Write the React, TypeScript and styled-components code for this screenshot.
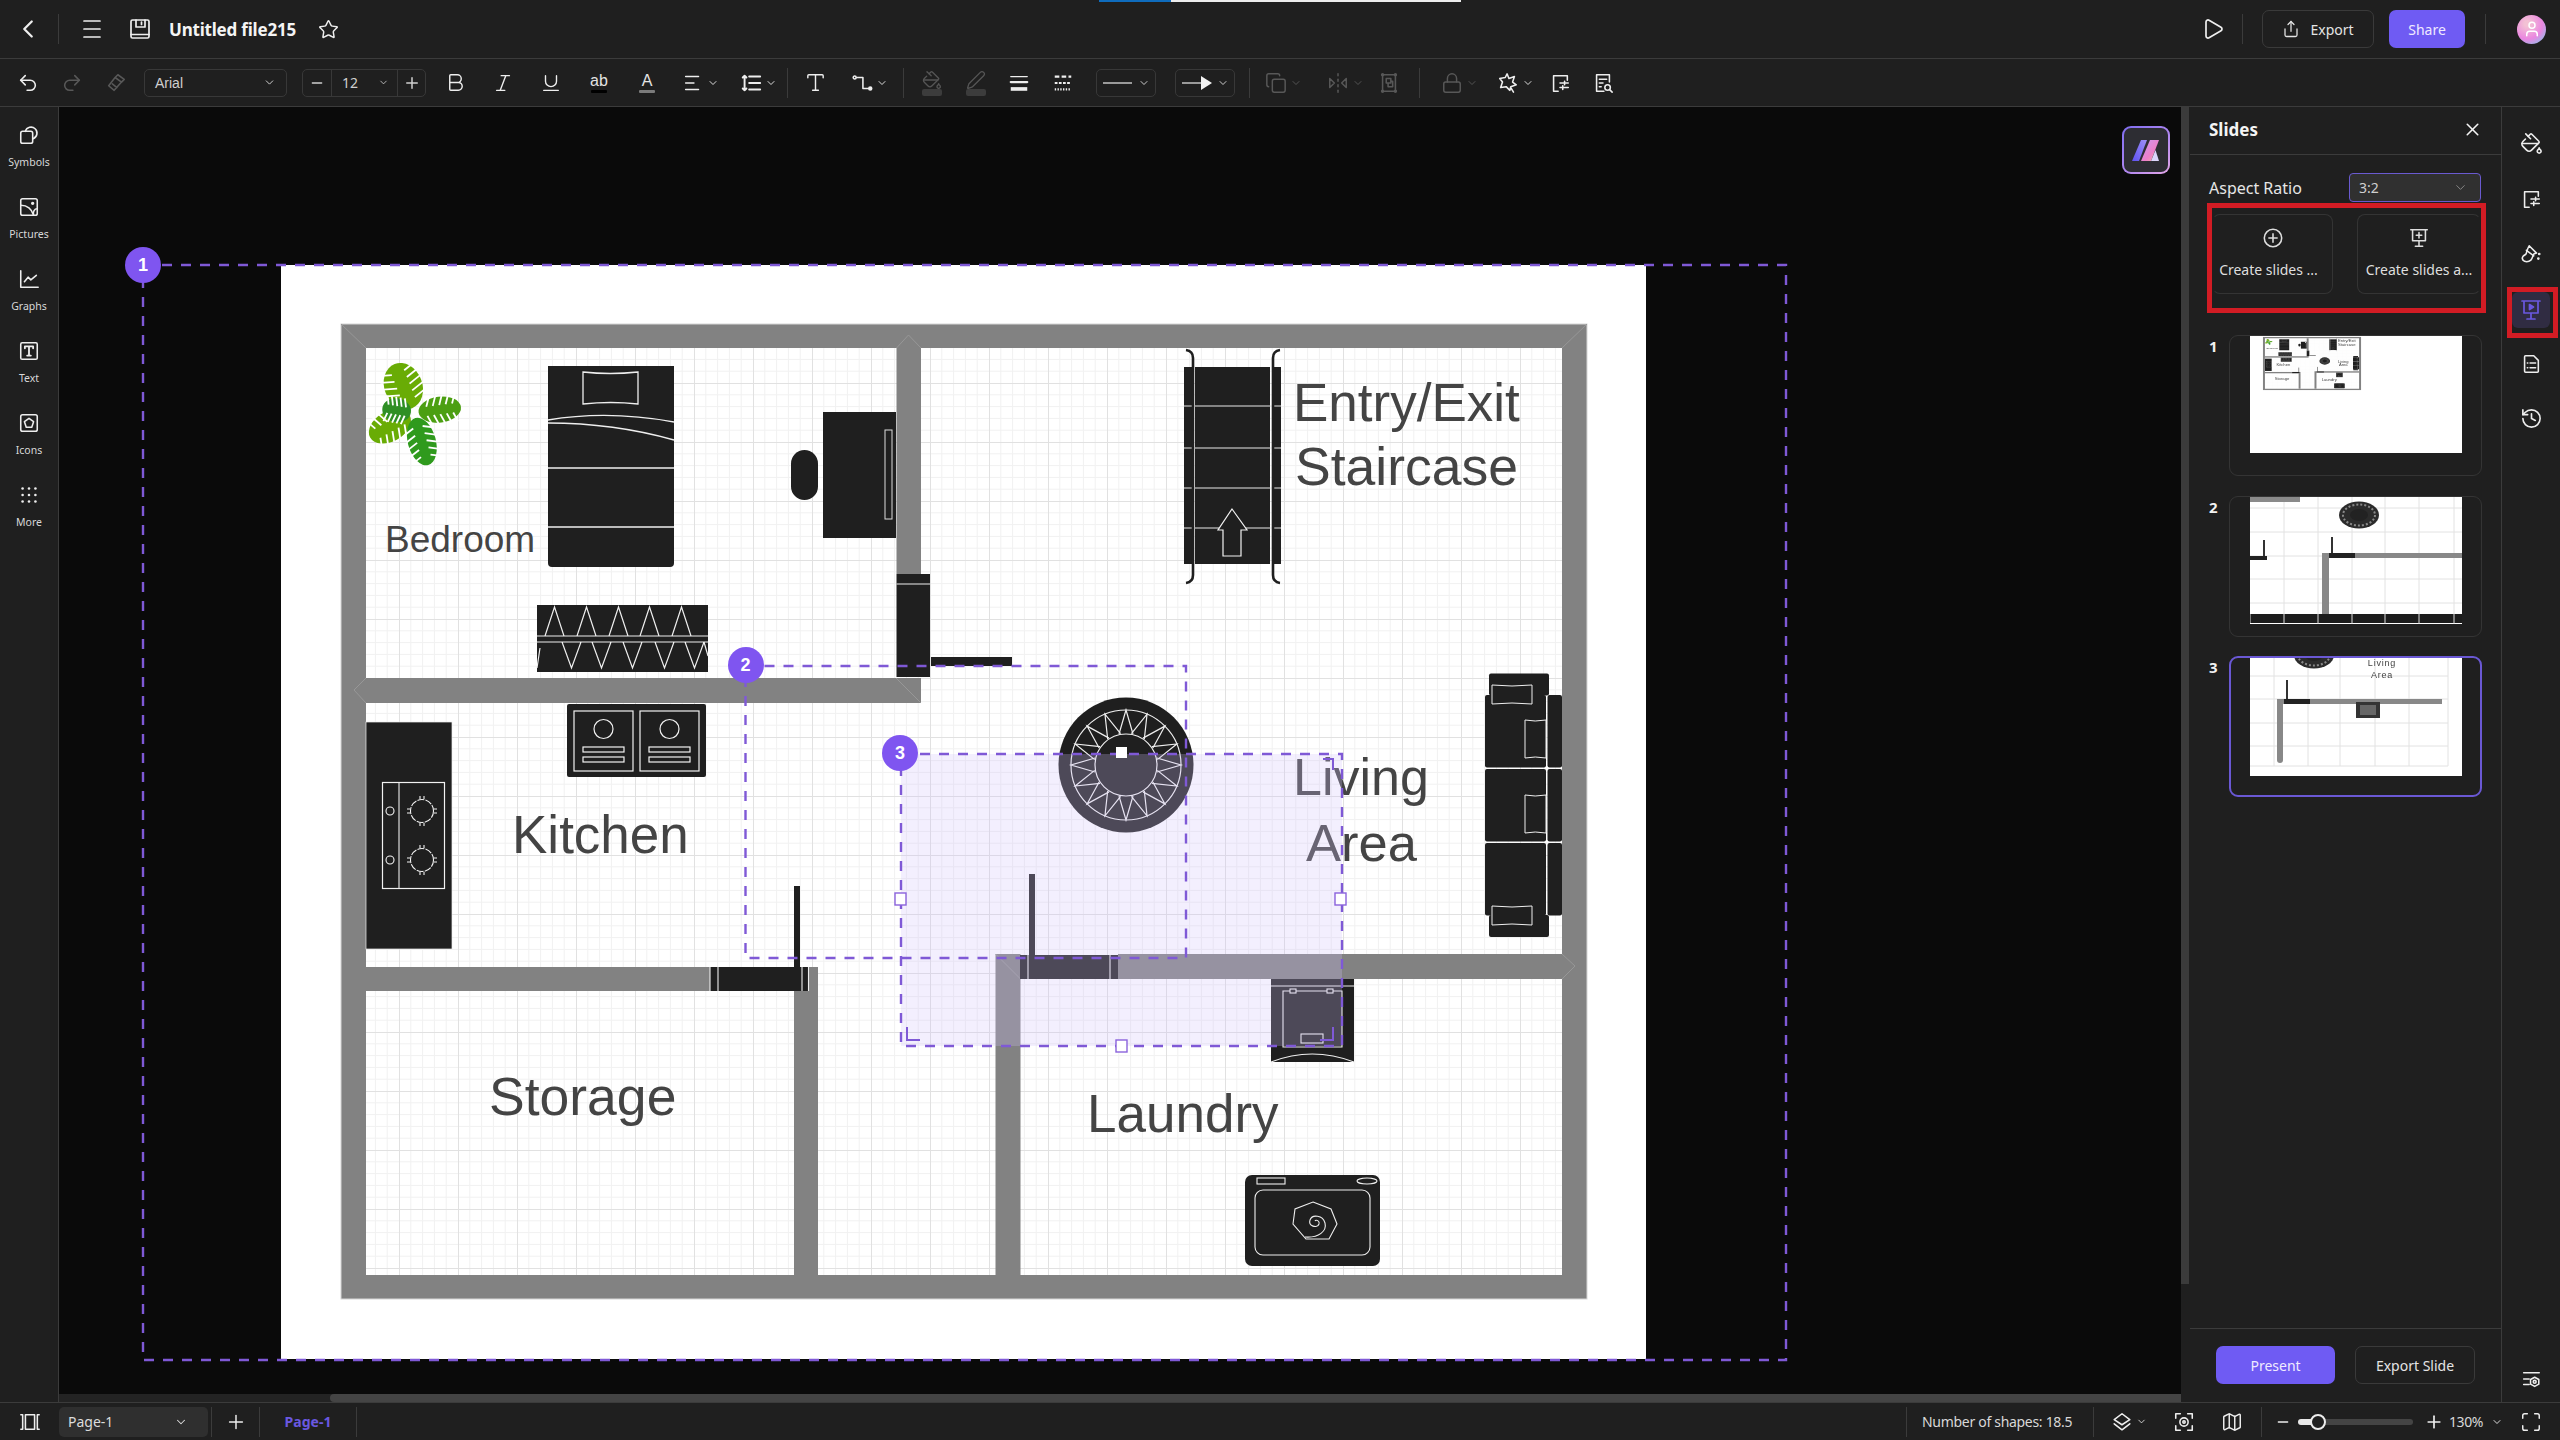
import React from 'react'
import styled, { createGlobalStyle } from 'styled-components'
import {
  Bold, ChevronDown, ChevronLeft, Copy, FlipHorizontal2, History, Italic, Lock, Map as MapIcon,
  Maximize, Minus, PaintBucket, Pen, Play, Plus, Redo2, Share, Star, Type, Underline, Undo2, User, X,
} from 'lucide-react'

const UI_FONT = `"Noto Sans", "Open Sans", sans-serif`
const BAR = '#1f1f1f'
const LINE = '#3b3b3b'
const PURPLE = '#6f5bf3'
const RED = '#d21c24'
const INK = '#1f1f1f'
const WALL = '#828282'

const Global = createGlobalStyle`
  html, body { margin: 0; padding: 0; background: #0a0a0a; }
  body { font-family: ${UI_FONT}; color: #e9e9e9; }
  *, *::before, *::after { box-sizing: border-box; }
`

const Root = styled.div`
  width: 2560px;
  height: 1440px;
  display: flex;
  flex-direction: column;
  overflow: hidden;
  position: relative;
  background: ${BAR};
`

/* ---------- small svg icon base ---------- */
const Ico = styled.svg.attrs<{ $s?: number }>(({ $s = 22 }) => ({
  width: $s,
  height: $s,
  viewBox: '0 0 24 24',
  fill: 'none',
  stroke: 'currentColor',
  strokeWidth: 1.7,
  strokeLinecap: 'round',
  strokeLinejoin: 'round',
}))`
  flex: none;
`

/* ---------- top bar ---------- */
const TopBarWrap = styled.header`
  height: 59px;
  flex: none;
  display: flex;
  align-items: center;
  border-bottom: 1px solid ${LINE};
  padding-right: 14px;
`

const LoadStrip = styled.div`
  position: absolute;
  top: 0;
  left: 1099px;
  width: 362px;
  height: 2px;
  background: linear-gradient(90deg, #0f6cbd 0 72px, #ececec 72px);
`

const IconBtn = styled.div<{ $w?: number; $ml?: number; $dim?: boolean }>`
  width: ${(p) => p.$w ?? 48}px;
  margin-left: ${(p) => p.$ml ?? 0}px;
  height: 44px;
  flex: none;
  display: flex;
  align-items: center;
  justify-content: center;
  gap: 3px;
  color: ${(p) => (p.$dim ? '#585858' : '#eeeeee')};
`

const VSep = styled.div<{ $ml?: number; $h?: number }>`
  width: 1px;
  flex: none;
  height: ${(p) => p.$h ?? 30}px;
  margin-left: ${(p) => p.$ml ?? 0}px;
  background: ${LINE};
`

const FileName = styled.div`
  margin-left: 5px;
  width: 131px;
  font-size: 17px;
  font-weight: 700;
  color: #f4f4f4;
  white-space: nowrap;
  letter-spacing: -0.2px;
`

const Spacer = styled.div`
  flex: 1;
`

const GhostButton = styled.div<{ $w: number; $ml?: number }>`
  width: ${(p) => p.$w}px;
  height: 38px;
  margin-left: ${(p) => p.$ml ?? 0}px;
  flex: none;
  border: 1px solid #3a3a3a;
  border-radius: 7px;
  display: flex;
  align-items: center;
  justify-content: center;
  gap: 10px;
  font-size: 14px;
  color: #e4e4e4;
`

const SolidButton = styled.div<{ $w: number; $ml?: number }>`
  width: ${(p) => p.$w}px;
  height: 38px;
  margin-left: ${(p) => p.$ml ?? 0}px;
  flex: none;
  border-radius: 7px;
  background: ${PURPLE};
  color: #efeaff;
  font-size: 14px;
  display: flex;
  align-items: center;
  justify-content: center;
`

const Avatar = styled.div`
  width: 29px;
  height: 29px;
  margin-left: 31px;
  flex: none;
  border-radius: 50%;
  background: radial-gradient(circle at 35% 30%, #f3c1d4 10%, #ea86e0 55%, #6fd3f0 100%);
  color: #fff;
  display: flex;
  align-items: center;
  justify-content: center;
`

/* ---------- toolbar ---------- */
const ToolBarWrap = styled.div`
  height: 48px;
  flex: none;
  display: flex;
  align-items: center;
  padding-left: 6px;
  border-bottom: 1px solid ${LINE};
`

const Select = styled.div<{ $w: number; $ml: number }>`
  width: ${(p) => p.$w}px;
  margin-left: ${(p) => p.$ml}px;
  height: 28px;
  flex: none;
  display: flex;
  align-items: center;
  justify-content: space-between;
  padding: 0 10px;
  border: 1px solid #383838;
  border-radius: 5px;
  font-family: "Liberation Sans", Arial, sans-serif;
  font-size: 14px;
  color: #d0d0d0;
`

const SizeGroup = styled.div`
  width: 124px;
  margin-left: 15px;
  height: 28px;
  flex: none;
  display: flex;
  align-items: center;
  border: 1px solid #383838;
  border-radius: 5px;
  color: #cfcfcf;
  font-size: 14px;
`

const SizeStep = styled.div<{ $w: number }>`
  width: ${(p) => p.$w}px;
  height: 100%;
  display: flex;
  align-items: center;
  justify-content: center;
`

const SizeValue = styled.div`
  flex: 1;
  height: 100%;
  display: flex;
  align-items: center;
  justify-content: space-between;
  padding: 0 8px 0 10px;
  border-left: 1px solid #383838;
  border-right: 1px solid #383838;
`

const TextTool = styled.div<{ $bar: string }>`
  display: flex;
  flex-direction: column;
  align-items: center;
  font-family: "Liberation Sans", Arial, sans-serif;
  font-size: 16px;
  line-height: 17px;
  color: #e4e4e4;

  &::after {
    content: '';
    width: 16px;
    height: 3px;
    margin-top: 1px;
    border-radius: 1px;
    background: ${(p) => p.$bar};
  }
`

const SwatchTool = styled.div`
  display: flex;
  flex-direction: column;
  align-items: center;
  color: #555;

  &::after {
    content: '';
    width: 20px;
    height: 7px;
    margin-top: -1px;
    border-radius: 2px;
    background: #3c3c3c;
  }
`

const LinePicker = styled.div<{ $w: number; $ml: number }>`
  width: ${(p) => p.$w}px;
  margin-left: ${(p) => p.$ml}px;
  height: 28px;
  flex: none;
  display: flex;
  align-items: center;
  justify-content: space-between;
  padding: 0 5px 0 6px;
  border: 1px solid #383838;
  border-radius: 5px;
  color: #dddddd;
`

const LinePreview = styled.div`
  width: 29px;
  height: 2px;
  background: #9a9a9a;
`

/* ---------- main ---------- */
const Main = styled.div`
  flex: 1;
  min-height: 0;
  display: flex;
`

const LeftRail = styled.nav`
  width: 59px;
  flex: none;
  padding-top: 12px;
  border-right: 1px solid ${LINE};
`

const RailItem = styled.div`
  height: 72px;
  display: flex;
  flex-direction: column;
  align-items: center;
  color: #ededed;
`

const RailIcon = styled.div`
  height: 32px;
  display: flex;
  align-items: center;
  justify-content: center;
`

const RailLabel = styled.div`
  margin-top: 4px;
  font-size: 10.5px;
  line-height: 14px;
  color: #d8d8d8;
`

/* ---------- canvas ---------- */
const Canvas = styled.main`
  flex: none;
  width: 2131px;
  position: relative;
  overflow: hidden;
  background: #0a0a0a;
`

const PagePlate = styled.div`
  position: absolute;
  left: 222px;
  top: 158px;
  width: 1365px;
  height: 1094px;
  background: #fff;
`

const PlanSvg = styled.svg`
  display: block;
  width: 100%;
  height: 100%;

  text {
    font-family: "Liberation Sans", Arial, sans-serif;
    fill: #444444;
  }
`

const Overlay = styled.svg`
  position: absolute;
  inset: 0;
  width: 100%;
  height: 100%;
  pointer-events: none;
`

const Badge = styled.div<{ $x: number; $y: number }>`
  position: absolute;
  left: ${(p) => p.$x - 59 - 18}px;
  top: ${(p) => p.$y - 107 - 18}px;
  width: 36px;
  height: 36px;
  border-radius: 50%;
  background: #7f55f0;
  color: #fff;
  display: flex;
  align-items: center;
  justify-content: center;
  font-family: "Liberation Sans", Arial, sans-serif;
  font-weight: 700;
  font-size: 18px;
`

const AiButton = styled.div`
  position: absolute;
  left: 2063px;
  top: 19px;
  width: 48px;
  height: 48px;
  border-radius: 9px;
  padding: 2px;
  background: linear-gradient(140deg, #7d6cf0, #b58af0 60%, #e3a6e6);
`

const AiInner = styled.div`
  width: 100%;
  height: 100%;
  border-radius: 7px;
  background: #2d2d33;
  display: flex;
  align-items: center;
  justify-content: center;
`

const VScroll = styled.div`
  position: absolute;
  right: 0;
  top: 0;
  bottom: 0;
  width: 9px;
  background: ${BAR};

  &::before {
    content: '';
    display: block;
    width: 8px;
    height: 1177px;
    background: #3b3b3b;
  }
`

const HScroll = styled.div`
  position: absolute;
  left: 0;
  right: 9px;
  bottom: 0;
  height: 8px;
  background: #232323;

  &::before {
    content: '';
    display: block;
    height: 100%;
    margin-left: 271px;
    background: #444;
    border-radius: 4px 0 0 4px;
  }
`

/* ---------- slides panel ---------- */
const SlidesPanel = styled.aside`
  width: 312px;
  flex: none;
  display: flex;
  flex-direction: column;
  border-right: 1px solid ${LINE};
`

const PanelHead = styled.div`
  height: 48px;
  flex: none;
  display: flex;
  align-items: center;
  justify-content: space-between;
  padding: 0 18px 2px 19px;
  border-bottom: 1px solid ${LINE};
  font-size: 17px;
  font-weight: 700;
  color: #f4f4f4;
`

const RatioRow = styled.div`
  margin-top: 18px;
  height: 29px;
  flex: none;
  display: flex;
  align-items: center;
  justify-content: space-between;
  padding: 0 20px 0 19px;
  font-size: 16px;
  color: #e6e6e6;
`

const RatioSelect = styled.div`
  width: 132px;
  height: 29px;
  display: flex;
  align-items: center;
  justify-content: space-between;
  padding: 0 12px 0 9px;
  background: #303030;
  border: 1px solid #6a5ad0;
  border-radius: 4px;
  font-size: 14px;
  color: #cfcfcf;
`

const CreateBox = styled.div`
  margin: 1px 0 0 17px;
  width: 279px;
  height: 110px;
  flex: none;
  border: 5px solid ${RED};
  padding-top: 6px;
  display: flex;
  justify-content: space-between;
  align-items: flex-start;
`

const CreateCard = styled.div<{ $w: number; $flat?: boolean }>`
  width: ${(p) => p.$w}px;
  height: 80px;
  display: flex;
  flex-direction: column;
  align-items: center;
  padding-top: 12px;
  gap: 12px;
  border: 1px solid #343434;
  border-left-color: ${(p) => (p.$flat ? 'transparent' : '#343434')};
  border-right-color: ${(p) => (p.$flat ? '#343434' : 'transparent')};
  border-radius: 8px;
  font-size: 14px;
  line-height: 18px;
  color: #dedede;
  white-space: nowrap;
`

const CardLabel = styled.div<{ $shift?: number }>`
  margin-left: ${(p) => p.$shift ?? 0}px;
`

const SlideList = styled.div`
  margin-top: 22px;
  padding-left: 19px;
  display: flex;
  flex-direction: column;
  gap: 19.5px;
`

const SlideRow = styled.div`
  display: flex;
`

const SlideNumber = styled.div`
  width: 20px;
  font-size: 15px;
  line-height: 22px;
  font-weight: 700;
  color: #f2f2f2;
`

const SlideCard = styled.div<{ $active?: boolean }>`
  width: 253px;
  height: 141px;
  display: flex;
  justify-content: center;
  align-items: flex-start;
  border: ${(p) => (p.$active ? `2px solid #6a58d4` : `1px solid #343434`)};
  border-radius: 9px;
  overflow: hidden;
`

const Thumb = styled.div<{ $h: number; $active?: boolean }>`
  width: 212px;
  height: ${(p) => p.$h}px;
  background: #fff;
  flex: none;
  filter: blur(0.35px);
`

const PanelFoot = styled.div`
  margin-top: auto;
  height: 74px;
  flex: none;
  display: flex;
  gap: 20px;
  padding: 17px 0 0 26px;
  border-top: 1px solid ${LINE};
`

/* ---------- right rail ---------- */
const RightRail = styled.aside`
  flex: none;
  width: 58px;
  display: flex;
  flex-direction: column;
  align-items: center;
  padding-top: 9px;
  color: #ededed;
`

const RightBtn = styled.div<{ $active?: boolean; $h?: number }>`
  width: 38px;
  height: ${(p) => (p.$active ? 36 : p.$h ?? 55)}px;
  margin: ${(p) => (p.$active ? '11px 0 8px' : '0')};
  flex: none;
  position: relative;
  display: flex;
  align-items: center;
  justify-content: center;
  border-radius: 6px;
  background: ${(p) => (p.$active ? '#302c42' : 'transparent')};
  color: ${(p) => (p.$active ? '#6a58e0' : 'inherit')};

  ${(p) =>
    p.$active &&
    `&::after {
      content: '';
      position: absolute;
      left: -5px;
      top: -5px;
      width: 51px;
      height: 51px;
      border: 5px solid ${RED};
    }`}
`

const RailBottom = styled.div`
  margin-top: auto;
`

/* ---------- status bar ---------- */
const StatusBar = styled.footer`
  height: 38px;
  flex: none;
  display: flex;
  align-items: center;
  border-top: 1px solid ${LINE};
  font-size: 14px;
  color: #d8d8d8;
`

const PageSelect = styled.div`
  width: 149px;
  height: 30px;
  flex: none;
  display: flex;
  align-items: center;
  justify-content: space-between;
  padding: 0 20px 0 9px;
  background: #2f2f2f;
  border-radius: 5px;
  color: #dcdcdc;
`

const PageTab = styled.div`
  width: 96px;
  flex: none;
  text-align: center;
  font-weight: 700;
  color: #6a58e0;
`

const ShapeCount = styled.div`
  margin-left: 15px;
  width: 171px;
  flex: none;
  white-space: nowrap;
  letter-spacing: -0.3px;
`

const ZoomTrack = styled.div`
  width: 115px;
  height: 6px;
  margin-left: 4px;
  flex: none;
  position: relative;
  border-radius: 3px;
  background: linear-gradient(90deg, #e8e8e8 0 19px, #444 19px);
`

const ZoomThumb = styled.div`
  position: absolute;
  left: 12px;
  top: -5px;
  width: 16px;
  height: 16px;
  border-radius: 50%;
  border: 2px solid #ededed;
  background: ${BAR};
`

const ZoomValue = styled.div`
  width: 41px;
  flex: none;
  white-space: nowrap;
  letter-spacing: -0.4px;
`

/* ---------- floor plan furniture ---------- */
const spikes = Array.from({ length: 16 }, (_, i) => (i * 360) / 16)

const Leaf = ({ tx, ty, color, w }: { tx: number; ty: number; color: string; w: number }) => {
  const hx = 414
  const hy = 413
  const len = Math.hypot(tx - hx, ty - hy)
  const deg = (Math.atan2(ty - hy, tx - hx) * 180) / Math.PI
  const cuts = [0.28, 0.42, 0.56, 0.7, 0.84]
  return (
    <g transform={`translate(${hx} ${hy}) rotate(${deg})`}>
      <ellipse cx={len * 0.56} cy={0} rx={len * 0.46} ry={w} fill={color} />
      {cuts.map((c) => (
        <g key={c} stroke="#fff" strokeWidth={1.8}>
          <line x1={len * (c + 0.08)} y1={-w - 1} x2={len * c} y2={-w * 0.35} />
          <line x1={len * (c + 0.08)} y1={w + 1} x2={len * c} y2={w * 0.35} />
        </g>
      ))}
    </g>
  )
}

const Bedroom = () => (
  <g>
    <path d="M548 366h126v197a4 4 0 0 1-4 4H552a4 4 0 0 1-4-4z" fill={INK} />
    <g fill="none" stroke="#eee" strokeWidth={1.3}>
      <path d="M583 372q27 3 55 0v32q-27-3-55 0z" />
      <path d="M548 420q60-10 126 2" />
      <path d="M548 423q66 0 126 17" />
      <path d="M548 468h126M548 527h126" />
    </g>
    <rect x={823} y={412} width={73} height={126} fill={INK} />
    <rect x={885} y={430} width={7} height={89} fill="none" stroke="#ddd" strokeWidth={1} />
    <rect x={791} y={450} width={27} height={50} rx={13.5} fill={INK} />
    <rect x={537} y={605} width={171} height={67} fill={INK} />
    <path
      d="M545 636l9.5-29 9.5 29M577 636l9.5-29 9.5 29M609 636l9.5-29 9.5 29M640 636l9.5-29 9.5 29M672 636l9.5-29 9.5 29M537 636h171M537 642h171M562 642l9.5 26 9.5-26M592 642l9.5 26 9.5-26M623 642l9.5 26 9.5-26M655 642l9.5 26 9.5-26M685 642l9.5 26 9.5-26M537 668l3-20M708 656l-4-14"
      fill="none"
      stroke="#eee"
      strokeWidth={1.2}
    />
    <Leaf tx={395} ty={365} color="#69ac05" w={19} />
    <Leaf tx={371} ty={437} color="#69ac05" w={15} />
    <Leaf tx={428} ty={464} color="#2f9a1d" w={14} />
    <Leaf tx={460} ty={407} color="#4c9f12" w={13} />
    <Leaf tx={383} ty={408} color="#2f8f25" w={12} />
  </g>
)

const Burner = ({ cy }: { cy: number }) => (
  <g fill="none" stroke="#f2f2f2" strokeWidth={1.1}>
    <circle cx={422} cy={cy} r={11.5} strokeDasharray="7 1.2" />
    <path d={`M420 ${cy - 15}v3M424 ${cy - 15}v3M420 ${cy + 12}v3M424 ${cy + 12}v3M407 ${cy - 2}h3M407 ${cy + 2}h3M434 ${cy - 2}h3M434 ${cy + 2}h3`} />
    <circle cx={390} cy={cy} r={4} />
  </g>
)

const SinkBowl = ({ x }: { x: number }) => (
  <g fill="none" stroke="#f2f2f2" strokeWidth={1.2}>
    <rect x={x} y={711} width={59} height={60} />
    <circle cx={x + 29.5} cy={729} r={9.5} />
    <rect x={x + 9} y={747} width={41} height={5} />
    <rect x={x + 9} y={757} width={41} height={5} />
  </g>
)

const Kitchen = () => (
  <g>
    <rect x={567} y={704} width={139} height={73} rx={2} fill={INK} />
    <SinkBowl x={574} />
    <SinkBowl x={640} />
    <rect x={366} y={722} width={86} height={227} fill={INK} stroke="#eee" strokeWidth={0.7} />
    <rect x={382.5} y={782.5} width={62} height={106} fill="none" stroke="#f2f2f2" strokeWidth={1.2} />
    <path d="M399 783v105" stroke="#ddd" strokeWidth={1.2} />
    <Burner cy={811} />
    <Burner cy={860} />
  </g>
)

const Stairs = () => (
  <g>
    <rect x={1184} y={367} width={8} height={197} fill={INK} />
    <rect x={1272} y={367} width={9} height={197} fill={INK} />
    <rect x={1195} y={367} width={75} height={197} fill={INK} />
    <path d="M1184 406h97M1184 448h97M1184 488h97M1184 528h97" stroke="#e8e8e8" strokeWidth={1.1} />
    <path d="M1232 509l15 21h-6v26h-18v-26h-5z" fill={INK} stroke="#f2f2f2" strokeWidth={1.2} />
    <g fill="none" stroke={INK} strokeWidth={2.6}>
      <path d="M1186 350q7 1 7 8v217q0 7-7 8" />
      <path d="M1280 350q-7 1-7 8v217q0 7 7 8" />
    </g>
  </g>
)

const Sofa = () => (
  <g>
    <rect x={1489} y={673.5} width={60} height={22} rx={2} fill={INK} />
    <rect x={1489} y={915} width={60} height={22} rx={2} fill={INK} />
    {[695, 769, 843].map((y) => (
      <g key={y}>
        <rect x={1485} y={y} width={61} height={72.5} rx={2} fill={INK} />
        <rect x={1547.5} y={y} width={14.5} height={72.5} rx={2} fill={INK} />
      </g>
    ))}
    <g fill={INK} stroke="#eee" strokeWidth={1}>
      <path d="M1492 685q20 2 40 0v19q-20-2-40 0z" />
      <path d="M1492 906q20 2 40 0v19q-20-2-40 0z" />
      <path d="M1525 720q10 2 21 0v38q-11-2-21 0z" />
      <path d="M1525 795q10 2 21 0v38q-11-2-21 0z" />
    </g>
  </g>
)

const Appliances = () => (
  <g>
    <rect x={1271} y={979} width={83} height={83} fill={INK} />
    <g fill="none" stroke="#eee" strokeWidth={1.1}>
      <path d="M1271 986h83" />
      <path d="M1283 1047v-56h59v56z" />
      <rect x={1290} y={989} width={6} height={4} fill={INK} />
      <rect x={1327} y={989} width={6} height={4} fill={INK} />
      <rect x={1301} y={1034} width={22} height={9} />
      <path d="M1271 1062q41-16 83 0" />
    </g>
    <rect x={1245} y={1175} width={135} height={91} rx={7} fill={INK} />
    <g fill="none" stroke="#eee" strokeWidth={1.1}>
      <rect x={1257} y={1178} width={28} height={6} />
      <ellipse cx={1367} cy={1181} rx={10} ry={3} />
      <rect x={1255} y={1190} width={115} height={65} rx={8} />
      <path d="M1313 1202l18 7 6 15-8 15h-23l-13-15 2-15z" />
      <path d="M1305 1237c14 1 22-6 20-14-2-8-13-9-15-3-2 6 7 9 9 4 1-3-3-5-4-3" />
    </g>
  </g>
)

const Doors = () => (
  <g>
    <rect x={896.5} y={574} width={33.5} height={103} fill={INK} />
    <path d="M896.5 584h33.5" stroke="#eee" strokeWidth={1.1} />
    <rect x={931} y={657} width={81} height={9} fill={INK} />
    <rect x={710} y={967} width={98} height={24} fill={INK} />
    <path d="M718 967v24M802 967v24M808.5 967v24M710 967v24" stroke="#eee" strokeWidth={1.1} />
    <rect x={794} y={886} width={6} height={81} fill={INK} />
    <rect x={1020} y={955} width={98} height={24} fill={INK} />
    <path d="M1028 955v24M1110 955v24" stroke="#eee" strokeWidth={1.1} />
    <rect x={1029} y={874} width={6} height={81} fill={INK} />
  </g>
)

const FloorPlan = ({ viewBox, stretch }: { viewBox: string; stretch?: boolean }) => (
  <PlanSvg viewBox={viewBox} preserveAspectRatio={stretch ? 'none' : undefined}>
    <defs>
      <pattern id="planGrid" x={281} y={265} width={59} height={59} patternUnits="userSpaceOnUse">
        <path d="M11.8 0v59M23.6 0v59M35.4 0v59M47.2 0v59M0 11.8h59M0 23.6h59M0 35.4h59M0 47.2h59" stroke="#f1f1f1" strokeWidth={1} />
        <path d="M.5 0v59M0 .5h59" stroke="#e1e1e1" strokeWidth={1} />
      </pattern>
    </defs>
    <rect x={341} y={324} width={1246} height={975} fill={WALL} stroke="#d6d6d6" strokeWidth={1} />
    <rect x={366} y={348} width={1196} height={927} fill="#fff" />
    <rect x={366} y={348} width={1196} height={927} fill="url(#planGrid)" />
    <g fill={WALL}>
      <rect x={896.5} y={348} width={24.5} height={226} />
      <rect x={366} y={678} width={555} height={25} />
      <rect x={366} y={967} width={344} height={24} />
      <rect x={808} y={967} width={10} height={24} />
      <rect x={794} y={991} width={24} height={284} />
      <rect x={995.5} y={954} width={25} height={321} />
      <rect x={1118} y={954} width={444} height={25} />
    </g>
    <path
      d="M341 324l25 24M1587 324l-25 24M896.5 348l12-13 12.5 13M366 678l-12 12 12 13M921 703l-25-25M1562 954l13 12-13 13M995.5 954l25 25"
      fill="none"
      stroke="#979797"
      strokeWidth={1}
    />
    <Bedroom />
    <Kitchen />
    <Stairs />
    <Sofa />
    <Appliances />
    <Doors />
    <circle cx={1126} cy={765} r={67.5} fill={INK} />
    <g fill="none" stroke="#eee" strokeWidth={1.2}>
      <circle cx={1126} cy={765} r={55} />
      <circle cx={1126} cy={765} r={31} />
      {spikes.map((a) => (
        <path key={a} d="M1119 734L1126 710L1133 734" transform={`rotate(${a} 1126 765)`} />
      ))}
    </g>
    <g>
      <text x={385} y={552} fontSize={37}>Bedroom</text>
      <text x={1293} y={421} fontSize={53}>Entry/Exit</text>
      <text x={1295} y={485} fontSize={53.5}>Staircase</text>
      <text x={512} y={853} fontSize={53}>Kitchen</text>
      <text x={1293} y={795} fontSize={52}>Living</text>
      <text x={1306} y={861} fontSize={52.5}>Area</text>
      <text x={489} y={1115} fontSize={53.5}>Storage</text>
      <text x={1087} y={1132} fontSize={53}>Laundry</text>
    </g>
  </PlanSvg>
)

const ThumbGrid = ({ xs, ys, w, h }: { xs: number[]; ys: number[]; w: number; h: number }) => (
  <g stroke="#e2e2e2" strokeWidth={1}>
    {xs.map((x) => <line key={x} x1={x} y1={0} x2={x} y2={h} />)}
    {ys.map((y) => <line key={y} x1={0} y1={y} x2={w} y2={y} />)}
  </g>
)

const MiniRug = ({ cx, cy }: { cx: number; cy: number }) => (
  <g>
    <ellipse cx={cx} cy={cy} rx={20} ry={13.5} fill="#2b2b2b" />
    <ellipse cx={cx} cy={cy} rx={16} ry={10.5} fill="none" stroke="#888" strokeWidth={2} strokeDasharray="2 2" />
    <ellipse cx={cx} cy={cy} rx={9} ry={6} fill="#222" />
  </g>
)

const SecondSlide = () => (
  <PlanSvg viewBox="0 0 212 127" preserveAspectRatio="none">
    <ThumbGrid xs={[34, 68, 102, 135, 169, 204]} ys={[11, 35, 59, 82, 106]} w={212} h={127} />
    <rect x={0} y={0} width={50} height={5} fill="#8a8a8a" />
    <MiniRug cx={109} cy={18} />
    <rect x={0} y={59} width={17} height={4} fill="#222" />
    <rect x={13} y={43} width={2} height={16} fill="#333" />
    <rect x={72} y={56} width={7} height={66} rx={3} fill="#888" />
    <rect x={72} y={56} width={140} height={5} fill="#888" />
    <rect x={79} y={56} width={26} height={5} fill="#222" />
    <rect x={81} y={40} width={2} height={16} fill="#333" />
    <rect x={0} y={117} width={212} height={9} fill="#1c1c1c" />
    <path d="M0 117v9M34 117v9M68 117v9M102 117v9M135 117v9M169 117v9M204 117v9" stroke="#ddd" strokeWidth={1} />
  </PlanSvg>
)

const ThirdSlide = () => (
  <PlanSvg viewBox="0 0 212 118" preserveAspectRatio="none">
    <ThumbGrid xs={[24, 58, 90, 125, 159, 198]} ys={[18, 41, 65, 88, 108]} w={198} h={108} />
    <MiniRug cx={64} cy={-3} />
    <text x={132} y={8} fontSize={9} textAnchor="middle" letterSpacing={0.8}>Living</text>
    <text x={132} y={20} fontSize={9} textAnchor="middle" letterSpacing={0.8}>Area</text>
    <rect x={27} y={41} width={6} height={64} rx={3} fill="#888" />
    <rect x={27} y={41} width={165} height={5} fill="#888" />
    <rect x={34} y={41} width={26} height={5} fill="#222" />
    <rect x={36} y={22} width={2} height={19} fill="#333" />
    <rect x={106} y={44} width={24} height={16} fill="#333" />
    <rect x={110} y={47} width={16} height={10} fill="#666" />
  </PlanSvg>
)

/* ---------- icons drawn by hand ---------- */
const SaveIcon = () => (
  <Ico $s={24}>
    <rect x={3} y={3} width={18} height={18} rx={1.5} />
    <path d="M8 3v7h9V3M13.500 5v2.500M3 17.500h18" />
  </Ico>
)
const HamburgerIcon = () => (
  <Ico $s={24}><path d="M4 4h16M4 12h16M4 20h16" /></Ico>
)
const PainterIcon = () => (
  <Ico><path d="M14 3l7 5-3 3-7-5zM11 6l-7 9 6 5 8-9M8 13l5 4" /></Ico>
)
const AlignIcon = () => (
  <Ico><path d="M4 5h14M4 12h9M4 19h14" /></Ico>
)
const SpacingIcon = () => (
  <Ico><path d="M10 5h12M10 12h12M10 19h12M5 4v16M3 6l2-2 2 2M3 18l2 2 2-2" strokeWidth={2.1} /></Ico>
)
const ConnectorIcon = () => (
  <Ico><circle cx={4} cy={6} r={1.6} /><path d="M6 6h7v12h6" /><circle cx={21} cy={18} r={1.6} fill="currentColor" /></Ico>
)
const WeightIcon = () => (
  <Ico><path d="M3 5h18" strokeWidth={1.4} /><path d="M3 11h18" strokeWidth={2.4} /><path d="M3 18.500h18" strokeWidth={4} strokeLinecap="butt" /></Ico>
)
const DashIcon = () => (
  <Ico>
    <path d="M3 5h18" strokeWidth={2.4} strokeDasharray="5 2.500" strokeLinecap="butt" />
    <path d="M3 12h18" strokeWidth={2.4} strokeDasharray="3 1.500" strokeLinecap="butt" />
    <path d="M3 19h18" strokeWidth={2.4} strokeDasharray="1.500 1.500" strokeLinecap="butt" />
  </Ico>
)
const ArrowPreview = () => (
  <svg width={34} height={16} viewBox="0 0 34 16">
    <path d="M0 8h20" stroke="#9a9a9a" strokeWidth={2} />
    <path d="M19 1l11 7-11 7z" fill="#f2f2f2" />
  </svg>
)
const GroupIcon = () => (
  <Ico>
    <rect x={5} y={3} width={14} height={18} />
    <path d="M9 7h5v5H9zM11 12v4h5v-6h-2" />
    <g fill="currentColor"><circle cx={5} cy={3} r={1} /><circle cx={19} cy={3} r={1} /><circle cx={5} cy={21} r={1} /><circle cx={19} cy={21} r={1} /></g>
  </Ico>
)
const MagicIcon = () => (
  <Ico><path d="M11 2l2 5 6-2-2 6 4 3-6 2-1 4-4-4-6 1 2-6-3-4 6-1zM15 17l3 5" /></Ico>
)
const FrameSliders = () => (
  <Ico><path d="M20 9V4H5v17h5" /><path d="M12 12h9M12 17h9M17 10v4M15 15v4" /></Ico>
)
const DocSearch = () => (
  <Ico><path d="M19 11V3H5v18h8" /><path d="M8 8h8M8 12h4M8 16h2" /><circle cx={17} cy={17} r={3} /><path d="M19.500 19.500L22 22" /></Ico>
)
const BrushIcon = () => (
  <Ico>
    <path d="M10 3l8 8-3 1-2 5c-1 3-5 4-8 3-2-1-3-3-2-5 1-2 4-2 4-4 0-2 1-4 3-8z" />
    <path d="M7 8l8 6" />
    <circle cx={21} cy={12} r={0.6} fill="currentColor" /><circle cx={20} cy={17} r={0.6} fill="currentColor" />
  </Ico>
)
const PresentIcon = ({ plus, s = 22 }: { plus?: boolean; s?: number }) => (
  <Ico $s={s}>
    <path d="M3 3h18M5 3v12h14V3M12 15v5M8 21h8" />
    {plus ? <path d="M9 9h6M12 6v6" /> : <path d="M10.500 6.500l4 2.500-4 2.500z" fill="currentColor" />}
  </Ico>
)
const ListDoc = () => (
  <Ico><path d="M6 3h9l5 5v12a1 1 0 0 1-1 1H6a1 1 0 0 1-1-1V4a1 1 0 0 1 1-1z" /><path d="M8 11h.5M11 11h6M8 16h.5M11 16h6" /></Ico>
)
const PanelCog = () => (
  <Ico><path d="M4 4h17M4 11h6M4 17h6" /><path d="M16 9l4.500 2.500v5L16 19l-4.500-2.500v-5z" /><circle cx={16} cy={14} r={1.600} /></Ico>
)
const CirclePlusIcon = () => (
  <Ico $s={22}><circle cx={12} cy={12} r={9.500} /><path d="M12 7.500v9M7.500 12h9" /></Ico>
)
const PagesIcon = () => (
  <Ico><rect x={7} y={4} width={10} height={16} /><path d="M2 4h2v16H2M22 4h-2v16h2" /></Ico>
)
const LayersIcon = () => (
  <Ico><path d="M12 3l8.500 6.500L12 15 3.500 9.500zM3.500 14l8.500 6.500 8.500-6.500" /></Ico>
)
const FocusIcon = () => (
  <Ico><path d="M3 8V3h5M16 3h5v5M21 16v5h-5M8 21H3v-5" /><circle cx={12} cy={12} r={4.500} /><circle cx={12} cy={12} r={1.300} /></Ico>
)
const SymbolsIcon = () => (
  <Ico><rect x={3} y={8} width={13} height={13} rx={2} /><path d="M8 8a6.500 6.500 0 1 1 8.500 8" /></Ico>
)
const PicturesIcon = () => (
  <Ico><rect x={3} y={3} width={18} height={18} rx={2} /><path d="M3 10c7 0 12 4 14 11M21 14c-3 0-5 3-4 7" /><circle cx={16} cy={8} r={1} fill="currentColor" /></Ico>
)
const GraphsIcon = () => (
  <Ico><path d="M3 3v18h19M7 15l4-5 3 3 6-5" /></Ico>
)
const TextIcon = () => (
  <Ico><rect x={3} y={3} width={18} height={18} rx={1.500} /><path d="M7.500 9V7h9v2M12 7v10M10 17h4" strokeWidth={2} /></Ico>
)
const IconsIcon = () => (
  <Ico><rect x={3} y={3} width={18} height={18} rx={2} /><path d="M12 7l5 3.600-2 6H9l-2-6z" /></Ico>
)
const MoreIcon = () => (
  <Ico>
    {[5, 12, 19].map((y) => [5, 12, 19].map((x) => <circle key={`${x}-${y}`} cx={x} cy={y} r={1.400} fill="currentColor" stroke="none" />))}
  </Ico>
)
const AiLogo = () => (
  <svg width={28} height={24} viewBox="0 0 28 24">
    <defs>
      <linearGradient id="aiA" x1="0" y1="1" x2="1" y2="0">
        <stop offset="0" stopColor="#5f52f0" />
        <stop offset="1" stopColor="#9d8ff7" />
      </linearGradient>
      <linearGradient id="aiB" x1="0" y1="0" x2="1" y2="1">
        <stop offset="0" stopColor="#c79cf5" />
        <stop offset="0.6" stopColor="#ec7fc9" />
        <stop offset="1" stopColor="#f7b79a" />
      </linearGradient>
    </defs>
    <path d="M0 23L9 2h6L7 23z" fill="url(#aiA)" />
    <path d="M9 23L18 2h9l-8 21z" fill="url(#aiB)" />
    <path d="M19 23l4.500-11L27 23z" fill="#dbd5fb" />
  </svg>
)

const railItems = [
  { label: 'Symbols', icon: <SymbolsIcon /> },
  { label: 'Pictures', icon: <PicturesIcon /> },
  { label: 'Graphs', icon: <GraphsIcon /> },
  { label: 'Text', icon: <TextIcon /> },
  { label: 'Icons', icon: <IconsIcon /> },
  { label: 'More', icon: <MoreIcon /> },
]

const Chev = ({ s = 13 }: { s?: number }) => <ChevronDown size={s} strokeWidth={1.8} />

const App: React.FC = () => (
  <Root>
    <Global />
    <LoadStrip />
    <TopBarWrap>
      <IconBtn $w={56}><ChevronLeft size={30} strokeWidth={1.8} /></IconBtn>
      <VSep $ml={2} />
      <IconBtn $ml={9}><HamburgerIcon /></IconBtn>
      <IconBtn><SaveIcon /></IconBtn>
      <FileName>Untitled file215</FileName>
      <IconBtn $w={24} $ml={16}><Star size={21} strokeWidth={1.7} /></IconBtn>
      <Spacer />
      <IconBtn $w={40}><Play size={24} strokeWidth={1.7} /></IconBtn>
      <VSep $ml={9} />
      <GhostButton $w={112} $ml={19}><Share size={18} strokeWidth={1.7} />Export</GhostButton>
      <SolidButton $w={76} $ml={15}>Share</SolidButton>
      <VSep $ml={20} />
      <Avatar><User size={18} strokeWidth={2} /></Avatar>
    </TopBarWrap>

    <ToolBarWrap>
      <IconBtn $w={44}><Undo2 size={22} strokeWidth={1.7} /></IconBtn>
      <IconBtn $w={44} $dim><Redo2 size={22} strokeWidth={1.7} /></IconBtn>
      <IconBtn $w={43} $dim><PainterIcon /></IconBtn>
      <Select $w={143} $ml={7}>Arial<Chev /></Select>
      <SizeGroup>
        <SizeStep $w={28}><Minus size={16} /></SizeStep>
        <SizeValue>12<Chev s={11} /></SizeValue>
        <SizeStep $w={27}><Plus size={18} /></SizeStep>
      </SizeGroup>
      <IconBtn $ml={5}><Bold size={23} strokeWidth={1.5} /></IconBtn>
      <IconBtn><Italic size={22} strokeWidth={1.5} /></IconBtn>
      <IconBtn><Underline size={22} strokeWidth={1.5} /></IconBtn>
      <IconBtn><TextTool $bar="#000">ab</TextTool></IconBtn>
      <IconBtn><TextTool $bar="#7b7b7b">A</TextTool></IconBtn>
      <IconBtn $w={58}><AlignIcon /><Chev s={12} /></IconBtn>
      <IconBtn $w={58}><SpacingIcon /><Chev s={12} /></IconBtn>
      <VSep />
      <IconBtn $w={40} $ml={7}><Type size={23} strokeWidth={1.5} /></IconBtn>
      <IconBtn $w={68}><ConnectorIcon /><Chev s={12} /></IconBtn>
      <VSep />
      <IconBtn $w={44} $ml={6}><SwatchTool><PaintBucket size={20} strokeWidth={1.6} /></SwatchTool></IconBtn>
      <IconBtn $w={43}><SwatchTool><Pen size={20} strokeWidth={1.6} /></SwatchTool></IconBtn>
      <IconBtn $w={44}><WeightIcon /></IconBtn>
      <IconBtn $w={43}><DashIcon /></IconBtn>
      <LinePicker $w={60} $ml={12}><LinePreview /><Chev s={12} /></LinePicker>
      <LinePicker $w={60} $ml={19}><ArrowPreview /><Chev s={12} /></LinePicker>
      <VSep $ml={14} />
      <IconBtn $w={50} $ml={8} $dim><Copy size={22} strokeWidth={1.6} /><Chev s={12} /></IconBtn>
      <IconBtn $w={50} $ml={12} $dim><FlipHorizontal2 size={22} strokeWidth={1.6} /><Chev s={12} /></IconBtn>
      <IconBtn $w={36} $ml={1} $dim><GroupIcon /></IconBtn>
      <VSep $ml={12} />
      <IconBtn $w={50} $ml={14} $dim><Lock size={22} strokeWidth={1.6} /><Chev s={12} /></IconBtn>
      <IconBtn $w={50} $ml={6}><MagicIcon /><Chev s={12} /></IconBtn>
      <IconBtn $w={40}><FrameSliders /></IconBtn>
      <IconBtn $w={46}><DocSearch /></IconBtn>
    </ToolBarWrap>

    <Main>
      <LeftRail>
        {railItems.map((item) => (
          <RailItem key={item.label}>
            <RailIcon>{item.icon}</RailIcon>
            <RailLabel>{item.label}</RailLabel>
          </RailItem>
        ))}
      </LeftRail>

      <Canvas>
        <PagePlate>
          <FloorPlan viewBox="281 265 1365 1094" />
        </PagePlate>
        <Overlay viewBox="59 107 2131 1295">
          <rect x={901} y={754} width={441} height={292} fill="rgba(209,194,250,.26)" />
          <g fill="none" stroke="#7f59d6" strokeWidth={2.4} strokeDasharray="10 9">
            <rect x={143} y={265} width={1643} height={1095} />
            <rect x={745.5} y={666} width={440.5} height={292} />
            <rect x={901} y={754} width={441} height={292} />
          </g>
          <path d="M907 1027v13h13M1333 1027v13h-13M1323 759h10v11" fill="none" stroke="#7f59d6" strokeWidth={2} />
          <g fill="#fff" stroke="#8a63dc" strokeWidth={1.4}>
            <rect x={895} y={893} width={11} height={12} />
            <rect x={1335} y={893} width={11} height={12} />
            <rect x={1116} y={1040} width={11} height={12} />
            <rect x={1116} y={747} width={11} height={11} stroke="none" />
          </g>
        </Overlay>
        <Badge $x={143} $y={265}>1</Badge>
        <Badge $x={745.5} $y={665}>2</Badge>
        <Badge $x={900} $y={753}>3</Badge>
        <AiButton><AiInner><AiLogo /></AiInner></AiButton>
        <VScroll />
        <HScroll />
      </Canvas>

      <SlidesPanel>
        <PanelHead>Slides<X size={21} strokeWidth={1.8} /></PanelHead>
        <RatioRow>
          Aspect Ratio
          <RatioSelect>3:2<ChevronDown size={15} strokeWidth={1.5} color="#8b8b8b" /></RatioSelect>
        </RatioRow>
        <CreateBox>
          <CreateCard $w={121} $flat><CirclePlusIcon /><CardLabel $shift={-8}>Create slides ...</CardLabel></CreateCard>
          <CreateCard $w={124}><PresentIcon plus /><CardLabel>Create slides a...</CardLabel></CreateCard>
        </CreateBox>
        <SlideList>
          <SlideRow>
            <SlideNumber>1</SlideNumber>
            <SlideCard>
              <Thumb $h={117}><FloorPlan viewBox="176 306 2694 2150" stretch /></Thumb>
            </SlideCard>
          </SlideRow>
          <SlideRow>
            <SlideNumber>2</SlideNumber>
            <SlideCard>
              <Thumb $h={127}><SecondSlide /></Thumb>
            </SlideCard>
          </SlideRow>
          <SlideRow>
            <SlideNumber>3</SlideNumber>
            <SlideCard $active>
              <Thumb $h={118}><ThirdSlide /></Thumb>
            </SlideCard>
          </SlideRow>
        </SlideList>
        <PanelFoot>
          <SolidButton $w={119}>Present</SolidButton>
          <GhostButton $w={120}>Export Slide</GhostButton>
        </PanelFoot>
      </SlidesPanel>

      <RightRail>
        <RightBtn><PaintBucket size={23} strokeWidth={1.7} /></RightBtn>
        <RightBtn><FrameSliders /></RightBtn>
        <RightBtn><BrushIcon /></RightBtn>
        <RightBtn $active><PresentIcon s={24} /></RightBtn>
        <RightBtn><ListDoc /></RightBtn>
        <RightBtn><History size={23} strokeWidth={1.7} /></RightBtn>
        <RailBottom><RightBtn $h={44}><PanelCog /></RightBtn></RailBottom>
      </RightRail>
    </Main>

    <StatusBar>
      <IconBtn $w={59} $dim={false}><PagesIcon /></IconBtn>
      <PageSelect>Page-1<Chev s={14} /></PageSelect>
      <VSep $ml={3} />
      <IconBtn $w={47}><Plus size={22} strokeWidth={1.6} /></IconBtn>
      <VSep />
      <PageTab>Page-1</PageTab>
      <VSep />
      <Spacer />
      <VSep />
      <ShapeCount>Number of shapes: 18.5</ShapeCount>
      <VSep />
      <IconBtn $w={58} $ml={6}><LayersIcon /><Chev s={11} /></IconBtn>
      <IconBtn $w={44} $ml={4}><FocusIcon /></IconBtn>
      <IconBtn $w={44} $ml={4}><MapIcon size={22} strokeWidth={1.6} /></IconBtn>
      <VSep $ml={7} />
      <IconBtn $w={22} $ml={10}><Minus size={16} strokeWidth={2} /></IconBtn>
      <ZoomTrack><ZoomThumb /></ZoomTrack>
      <IconBtn $w={30} $ml={6}><Plus size={20} strokeWidth={2} /></IconBtn>
      <ZoomValue>130%</ZoomValue>
      <IconBtn $w={14}><Chev s={12} /></IconBtn>
      <IconBtn $w={38} $ml={8}><Maximize size={22} strokeWidth={1.6} /></IconBtn>
      <VSep $h={0} $ml={9} />
    </StatusBar>
  </Root>
)

export default App
